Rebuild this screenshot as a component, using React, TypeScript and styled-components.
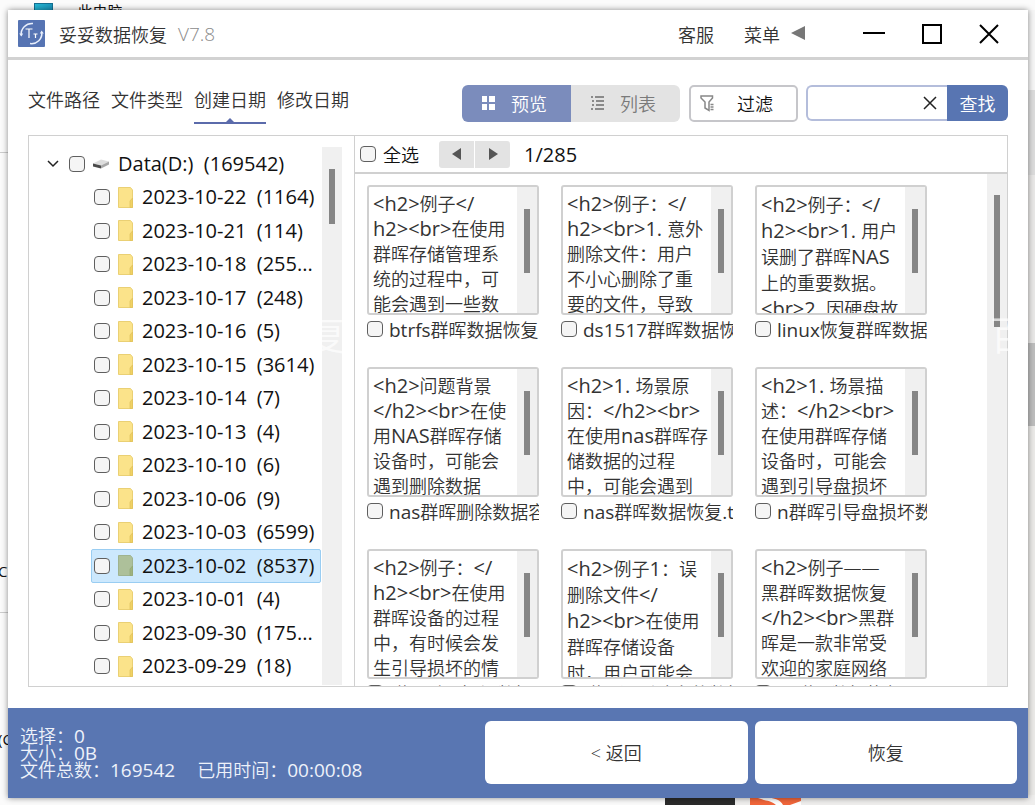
import React from "react";
import styled, { createGlobalStyle, css } from "styled-components";

const GlobalStyle = createGlobalStyle`
  *, *::before, *::after { box-sizing: border-box; }
  body {
    margin: 0;
    background: #fbfbfb;
    color: #333;
    font-family: "Open Sans", "Noto Sans CJK SC", sans-serif;
    font-size: 18px;
    font-weight: 350;
  }
  button, input { font: inherit; color: inherit; margin: 0; }
  button { border: 0; background: none; padding: 0; cursor: pointer; }
`;

/* ---------- desktop behind the window ---------- */

const Desktop = styled.div`
  position: relative;
  height: 100vh;
  min-height: 600px;
  padding: 10px 7px 7px 8px;
  overflow: hidden;
`;

const Backdrop = styled.div`
  position: absolute;
  inset: 0;
  overflow: hidden;
  color: #111;
  font-weight: 400;
`;

const AddressBar = styled.div`
  position: absolute;
  top: 3px;
  left: 34px;
  display: flex;
  gap: 10px;
  align-items: flex-start;
  font-size: 15px;
  line-height: 17px;
`;

const PcIcon = styled.span`
  width: 19px;
  height: 16px;
  background: linear-gradient(120deg, #25b9d6, #1687b0);
  border: 1px solid #146f92;
`;

const EdgeText = styled.span<{ $top: number }>`
  position: absolute;
  left: -2px;
  top: ${(p) => p.$top}px;
  font-size: 15px;
  line-height: 18px;
`;

const Rule = styled.span<{ $top: number }>`
  position: absolute;
  left: 0;
  top: ${(p) => p.$top}px;
  width: 10px;
  height: 1px;
  background: #ccc;
`;

const RightEdge = styled.div`
  position: absolute;
  right: 0;
  top: 10px;
  bottom: 0;
  width: 10px;
  background: linear-gradient(#f6f6f6 0 80px, #dcdcdc 80px 165px, #e9e8e7 165px 333px, #bdbdbd 333px 416px, #ebeae8 416px);
`;

const Taskbar = styled.div`
  position: absolute;
  left: 665px;
  right: 0;
  bottom: 0;
  height: 10px;
  display: flex;
  gap: 15px;
  background: #efeeed;
`;

const TaskDark = styled.span`
  width: 70px;
  background: #2b2b2b;
`;

/* ---------- window ---------- */

const Window = styled.main`
  position: relative;
  height: 100%;
  display: flex;
  flex-direction: column;
  background: #fff;
  box-shadow: 0 0 6px rgba(0, 0, 0, 0.45);
`;

const TitleBar = styled.header`
  display: flex;
  align-items: center;
  height: 50px;
  flex: none;
  padding: 0 29px 0 10px;
  border-bottom: 3px solid #d2d2d2;
`;

const AppName = styled.h1`
  margin: 0 0 0 14px;
  font-size: 18px;
  font-weight: 350;
`;

const Version = styled.span`
  margin-left: 11px;
  font-size: 19px;
  color: #8c8c8c;
`;

const TitleActions = styled.nav`
  display: flex;
  align-items: center;
  margin-left: auto;
  gap: 30px;
`;

const MenuButton = styled.button`
  display: flex;
  align-items: center;
  gap: 11px;
`;

const MenuArrow = styled.svg`
  margin-bottom: 2px;
`;

const WindowControls = styled.div`
  display: flex;
  align-items: center;
  gap: 37px;
  margin-left: 58px;
`;

const IconButton = styled.button`
  display: flex;
`;

const Content = styled.section`
  flex: 1;
  min-height: 0;
  display: flex;
  flex-direction: column;
  padding: 25px 20px 21px;
`;

const Toolbar = styled.div`
  display: flex;
  align-items: flex-start;
  height: 37px;
  flex: none;
  margin-bottom: 13px;
`;

const Tabs = styled.div`
  display: flex;
  gap: 11px;
  margin-right: auto;
`;

const Tab = styled.button<{ $active?: boolean }>`
  position: relative;
  height: 39px;
  padding-bottom: 7px;
  line-height: 30px;
  white-space: nowrap;
  border-bottom: 2px solid ${(p) => (p.$active ? "#5b6bab" : "transparent")};
  ${(p) =>
    p.$active &&
    css`
      &::after {
        content: "";
        position: absolute;
        left: 50%;
        bottom: 0;
        margin-left: -4px;
        border: 4px solid transparent;
        border-top: 0;
        border-bottom-color: #5b6bab;
      }
    `}
`;

const ViewSwitch = styled.div`
  display: flex;
  height: 37px;
  border-radius: 6px;
  overflow: hidden;
`;

const ViewButton = styled.button<{ $active?: boolean }>`
  display: flex;
  align-items: center;
  justify-content: center;
  gap: 16px;
  width: 109px;
  padding: 0 4px 2px 0;
  color: ${(p) => (p.$active ? "#fff" : "#7a7a7a")};
  background: ${(p) => (p.$active ? "#7b8cbc" : "#e3e3e3")};
`;

const FilterButton = styled.button`
  display: flex;
  align-items: center;
  gap: 21px;
  width: 109px;
  height: 37px;
  margin: 0 8px 0 9px;
  padding: 0 0 1px 9px;
  border: 2px solid #c6c6ca;
  border-radius: 5px;
  color: #111;
`;

const SearchForm = styled.form`
  display: flex;
  height: 36px;
`;

const SearchField = styled.div`
  display: flex;
  align-items: center;
  width: 141px;
  padding-right: 10px;
  border: 2px solid #b4bddb;
  border-right: 0;
  border-radius: 6px 0 0 6px;
`;

const SearchInput = styled.input`
  flex: 1;
  min-width: 0;
  border: 0;
  outline: 0;
  background: transparent;
  padding: 0 6px;
`;

const SearchButton = styled.button`
  width: 61px;
  border-radius: 0 6px 6px 0;
  background: #5875b2;
  color: #fff;
`;

/* ---------- main panel ---------- */

const Panel = styled.div`
  flex: 1;
  min-height: 0;
  display: flex;
  border: 1px solid #d0d0d0;
`;

const TreePane = styled.aside`
  display: flex;
  width: 326px;
  flex: none;
  border-right: 1px solid #d0d0d0;
`;

const Tree = styled.ul`
  flex: 1;
  display: flex;
  flex-direction: column;
  margin: 0;
  padding: 11px 1px 3px 16px;
  list-style: none;
  font-size: 20px;
  font-weight: 400;
  color: #111;
`;

const TreeRow = styled.li<{ $child?: boolean; $selected?: boolean }>`
  flex: 1;
  min-height: 0;
  display: flex;
  align-items: center;
  margin-left: ${(p) => (p.$child ? 46 : 0)}px;
  padding-left: ${(p) => (p.$child ? 2 : 1)}px;
  border: 1px solid ${(p) => (p.$selected ? "#99cdf2" : "transparent")};
  background: ${(p) => (p.$selected ? "#cce8fd" : "transparent")};
  border-radius: 2px;
  white-space: pre;
`;

const TreeLabel = styled.label`
  display: flex;
  align-items: center;
  line-height: 28px;
`;

const Chevron = styled.svg`
  flex: none;
  margin-right: 10px;
`;

const ItemIcon = styled.svg`
  flex: none;
  margin: 0 9px 0 8px;
`;

const Check = styled.input.attrs({ type: "checkbox" })`
  appearance: none;
  flex: none;
  width: 16px;
  height: 16px;
  border: 1px solid #5f5f5f;
  border-radius: 4px;
  background: #f5f5f5;
  &:checked { background: #5875b2; }
`;

const ScrollTrack = styled.div<{ $gap: number }>`
  flex: none;
  width: 20px;
  padding-top: ${(p) => p.$gap}px;
  background: #f0f0f0;
`;

const ScrollThumb = styled.div<{ $size: number }>`
  width: 6px;
  height: ${(p) => p.$size}px;
  margin-left: 7px;
  background: #868686;
`;

const TreeScroll = styled.div`
  display: flex;
  padding: 11px 12px 1px 0;
`;

const PreviewPane = styled.div`
  flex: 1;
  min-width: 0;
  display: flex;
  flex-direction: column;
`;

const PreviewHeader = styled.div`
  display: flex;
  align-items: center;
  height: 38px;
  flex: none;
  padding-left: 5px;
  border-bottom: 2px solid #d0d0d0;
  color: #111;
`;

const SelectAll = styled.label`
  display: flex;
  align-items: center;
  gap: 7px;
`;

const Pager = styled.div`
  display: flex;
  gap: 1px;
  margin: 0 14px 0 20px;
  border-radius: 3px;
  overflow: hidden;
`;

const PagerButton = styled.button`
  display: flex;
  align-items: center;
  justify-content: center;
  width: 35px;
  height: 27px;
  background: #e3e3e3;
`;

const PageCount = styled.span`
  font-size: 20px;
  font-weight: 400;
`;

const PreviewBody = styled.div`
  flex: 1;
  min-height: 0;
  display: flex;
  overflow: hidden;
`;

const CardGrid = styled.div`
  flex: 1;
  min-width: 0;
  display: grid;
  grid-template-columns: repeat(auto-fill, 172px);
  grid-auto-rows: 160px;
  gap: 22px;
  padding: 11px 0 0 12px;
`;

const Card = styled.article`
  min-width: 0;
`;

const CardPreview = styled.div`
  display: flex;
  height: 130px;
  border: 2px solid #d0d0d0;
  border-radius: 3px;
  overflow: hidden;
`;

const CardText = styled.p<{ $loose?: boolean }>`
  flex: 1;
  min-width: 0;
  margin: 0;
  padding: 5px 0 0 4px;
  line-height: ${(p) => (p.$loose ? 26 : 25)}px;
  white-space: pre;
`;

const CardName = styled.label`
  display: flex;
  align-items: center;
  gap: 6px;
  height: 28px;
  overflow: hidden;
  white-space: nowrap;
`;

const Latin = styled.span<{ $size: number }>`
  font-size: ${(p) => p.$size}px;
  line-height: 0;
  font-weight: 400;
`;

/* ---------- footer ---------- */

const Footer = styled.footer`
  display: flex;
  align-items: center;
  height: 90px;
  flex: none;
  padding: 0 11px 0 12px;
  background: #5976b2;
`;

const Stats = styled.div`
  flex: 1;
  min-width: 0;
  line-height: 17px;
  white-space: nowrap;
  color: #eef2fa;
`;

const StatLine = styled.div`
  display: flex;
  gap: 22px;
`;

const FooterActions = styled.div`
  display: flex;
  gap: 7px;
  width: 532px;
`;

const ActionButton = styled.button`
  flex: 1;
  height: 63px;
  margin-bottom: 2px;
  border-radius: 6px;
  background: #fff;
`;

const Watermark = styled.span<{ $left: number }>`
  position: absolute;
  left: ${(p) => p.$left}px;
  top: 302px;
  font-size: 40px;
  line-height: 46px;
  color: rgba(255, 255, 255, 0.7);
  pointer-events: none;
`;

/* Latin runs are set a little larger than the Chinese text around them. */
function Mixed({ text, size = 20 }: { text: string; size?: number }) {
  return (
    <>
      {text.split(/([\x20-\x7e]+)/).map((part, i) =>
        i % 2 ? (
          <Latin key={i} $size={size}>{part}</Latin>
        ) : (
          part
        )
      )}
    </>
  );
}

const folders: [string, string][] = [
  ["2023-10-22", "(1164)"],
  ["2023-10-21", "(114)"],
  ["2023-10-18", "(255..."],
  ["2023-10-17", "(248)"],
  ["2023-10-16", "(5)"],
  ["2023-10-15", "(3614)"],
  ["2023-10-14", "(7)"],
  ["2023-10-13", "(4)"],
  ["2023-10-10", "(6)"],
  ["2023-10-06", "(9)"],
  ["2023-10-03", "(6599)"],
  ["2023-10-02", "(8537)"],
  ["2023-10-01", "(4)"],
  ["2023-09-30", "(175..."],
  ["2023-09-29", "(18)"],
];

const files: { name: string; lines: string[]; loose?: boolean }[] = [
  { name: "btrfs群晖数据恢复", lines: ["<h2>例子</", "h2><br>在使用", "群晖存储管理系", "统的过程中，可", "能会遇到一些数"] },
  { name: "ds1517群晖数据恢复", lines: ["<h2>例子：</", "h2><br>1. 意外", "删除文件：用户", "不小心删除了重", "要的文件，导致"] },
  { name: "linux恢复群晖数据", loose: true, lines: ["<h2>例子：</", "h2><br>1. 用户", "误删了群晖NAS", "上的重要数据。", "<br>2. 因硬盘故"] },
  { name: "nas群晖删除数据容", lines: ["<h2>问题背景", "</h2><br>在使", "用NAS群晖存储", "设备时，可能会", "遇到删除数据"] },
  { name: "nas群晖数据恢复.txt", lines: ["<h2>1. 场景原", "因：</h2><br>", "在使用nas群晖存", "储数据的过程", "中，可能会遇到"] },
  { name: "n群晖引导盘损坏数据", lines: ["<h2>1. 场景描", "述：</h2><br>", "在使用群晖存储", "设备时，可能会", "遇到引导盘损坏"] },
  { name: "群晖引导损坏数据", lines: ["<h2>例子：</", "h2><br>在使用", "群晖设备的过程", "中，有时候会发", "生引导损坏的情"] },
  { name: "群晖误删除文件数据", loose: true, lines: ["<h2>例子1：误", "删除文件</", "h2><br>在使用", "群晖存储设备", "时，用户可能会"] },
  { name: "黑群晖数据恢复", lines: ["<h2>例子——", "黑群晖数据恢复", "</h2><br>黑群", "晖是一款非常受", "欢迎的家庭网络"] },
];

function Logo() {
  return (
    <svg width="27" height="27" viewBox="0 0 27 27" role="img" aria-label="TT">
      <rect width="27" height="27" rx="1" fill="#5674b3" />
      <path d="M3.200 15.500C2.500 8.500 8 3 15 3.500" fill="none" stroke="#e8effc" strokeWidth="1.500" />
      <path d="M1.200 13.500H5.200L3.400 16.500Z" fill="#e8effc" />
      <path d="M23.800 12C24.500 19 19 24.500 12 23.500" fill="none" stroke="#e8effc" strokeWidth="1.500" />
      <path d="M21.800 13.500H25.800L23.600 10.500Z" fill="#e8effc" />
      <path d="M7.500 9H14.500M11 9V18M15.500 14H19.500M17.500 14V18" fill="none" stroke="#fff" strokeWidth="1.200" />
    </svg>
  );
}

function FolderIcon({ selected }: { selected?: boolean }) {
  return (
    <ItemIcon width="15" height="21" viewBox="0 0 15 21" aria-hidden="true">
      <path d="M.5.5H12.500L14.500 3V20.500H.5Z" fill={selected ? "#adc09a" : "#fbe38a"} stroke={selected ? "#9fb38f" : "#ead074"} />
      <path d="M14.500 11L12 14V20.500H14.500Z" fill={selected ? "#9fb27f" : "#f0d264"} stroke={selected ? "#92a873" : "#dfc05a"} strokeWidth=".7" />
    </ItemIcon>
  );
}

function DriveIcon() {
  return (
    <ItemIcon width="16" height="10" viewBox="0 0 16 10" aria-hidden="true">
      <path d="M0 4.500L8 0.500 16 2.500 8 6.500Z" fill="#dedede" />
      <path d="M0 4.500L8 6.500V9.500L0 7.500Z" fill="#4b4b4b" />
      <path d="M8 6.500L16 2.500V5.500L8 9.500Z" fill="#a8a8a8" />
    </ItemIcon>
  );
}

export default function App() {
  return (
    <>
      <GlobalStyle />
      <Desktop>
        <Backdrop aria-hidden="true">
          <AddressBar>
            <PcIcon />
            <span>›</span>
            <span>此电脑</span>
            <span>›</span>
          </AddressBar>
          <Rule $top={152} />
          <Rule $top={612} />
          <EdgeText $top={562}>C</EdgeText>
          <EdgeText $top={730}>(C</EdgeText>
          <RightEdge />
          <Taskbar>
            <TaskDark />
            <svg width="51" height="10" viewBox="0 0 51 10">
              <rect width="51" height="10" fill="#f2663a" />
              <path d="M8 3C20 1 31 4 33 10H26C21 5 15 6 8 3ZM40 10L51 6V10Z" fill="#fff" />
            </svg>
          </Taskbar>
        </Backdrop>

        <Window>
          <TitleBar>
            <Logo />
            <AppName>妥妥数据恢复</AppName>
            <Version>V7.8</Version>
            <TitleActions>
              <button type="button">客服</button>
              <MenuButton type="button">
                菜单
                <MenuArrow width="14" height="14" viewBox="0 0 14 14" aria-hidden="true">
                  <path d="M0 7L14 0V14Z" fill="#777" />
                </MenuArrow>
              </MenuButton>
            </TitleActions>
            <WindowControls>
              <IconButton type="button" aria-label="最小化">
                <svg width="22" height="20" viewBox="0 0 22 20"><path d="M0 9H22" stroke="#000" strokeWidth="2" /></svg>
              </IconButton>
              <IconButton type="button" aria-label="最大化">
                <svg width="20" height="20" viewBox="0 0 20 20"><path d="M1 1H19V19H1Z" fill="none" stroke="#000" strokeWidth="2" /></svg>
              </IconButton>
              <IconButton type="button" aria-label="关闭">
                <svg width="20" height="20" viewBox="0 0 20 20"><path d="M1 1L19 19M19 1L1 19" fill="none" stroke="#000" strokeWidth="2" /></svg>
              </IconButton>
            </WindowControls>
          </TitleBar>

          <Content>
            <Toolbar>
              <Tabs>
                <Tab type="button">文件路径</Tab>
                <Tab type="button">文件类型</Tab>
                <Tab type="button" $active>创建日期</Tab>
                <Tab type="button">修改日期</Tab>
              </Tabs>
              <ViewSwitch>
                <ViewButton type="button" $active>
                  <svg width="13" height="14" viewBox="0 0 13 14" aria-hidden="true">
                    <path d="M0 0H5V6H0ZM7 0H13V6H7ZM0 8H5V14H0ZM7 8H13V14H7Z" fill="#fff" />
                  </svg>
                  预览
                </ViewButton>
                <ViewButton type="button">
                  <svg width="13" height="14" viewBox="0 0 13 14" aria-hidden="true">
                    <path d="M0 1H2M1 5H3M1 9H3M0 13H2M4 1H13M5 5H13M5 9H13M4 13H13" stroke="#8a8a8a" strokeWidth="2" />
                  </svg>
                  列表
                </ViewButton>
              </ViewSwitch>
              <FilterButton type="button">
                <svg width="16" height="17" viewBox="0 0 16 17" fill="none" stroke="#888" strokeWidth="1.500" aria-hidden="true">
                  <path d="M1 1H12.500V3L9 7V15.500L5 13V7L1 3Z" />
                  <path d="M10.500 9.500H13.500M10.500 12H13.500M10.500 14.500H13.500" />
                </svg>
                过滤
              </FilterButton>
              <SearchForm onSubmit={(e) => e.preventDefault()}>
                <SearchField>
                  <SearchInput aria-label="查找" />
                  <IconButton type="reset" aria-label="清除">
                    <svg width="14" height="14" viewBox="0 0 14 14"><path d="M1 1L13 13M13 1L1 13" stroke="#222" strokeWidth="1.500" /></svg>
                  </IconButton>
                </SearchField>
                <SearchButton type="submit">查找</SearchButton>
              </SearchForm>
            </Toolbar>

            <Panel>
              <TreePane>
                <Tree>
                  <TreeRow>
                    <Chevron width="12" height="8" viewBox="0 0 12 8" aria-hidden="true">
                      <path d="M1 1L6 6 11 1" fill="none" stroke="#222" strokeWidth="1.500" />
                    </Chevron>
                    <TreeLabel>
                      <Check />
                      <DriveIcon />
                      {"Data(D:)  (169542)"}
                    </TreeLabel>
                  </TreeRow>
                  {folders.map(([date, count]) => {
                    const selected = date === "2023-10-02";
                    return (
                      <TreeRow key={date} $child $selected={selected}>
                        <TreeLabel>
                          <Check />
                          <FolderIcon selected={selected} />
                          {`${date}  ${count}`}
                        </TreeLabel>
                      </TreeRow>
                    );
                  })}
                </Tree>
                <TreeScroll>
                  <ScrollTrack $gap={22}><ScrollThumb $size={55} /></ScrollTrack>
                </TreeScroll>
              </TreePane>

              <PreviewPane>
                <PreviewHeader>
                  <SelectAll><Check />全选</SelectAll>
                  <Pager>
                    <PagerButton type="button" aria-label="上一页">
                      <svg width="10" height="12" viewBox="0 0 10 12"><path d="M0 6L9 0V12Z" fill="#555" /></svg>
                    </PagerButton>
                    <PagerButton type="button" aria-label="下一页">
                      <svg width="10" height="12" viewBox="0 0 10 12"><path d="M10 6L1 0V12Z" fill="#555" /></svg>
                    </PagerButton>
                  </Pager>
                  <PageCount>1/285</PageCount>
                </PreviewHeader>
                <PreviewBody>
                  <CardGrid>
                    {files.map((file) => (
                      <Card key={file.name}>
                        <CardPreview>
                          <CardText $loose={file.loose}><Mixed text={file.lines.join("\n")} /></CardText>
                          <ScrollTrack $gap={22}><ScrollThumb $size={64} /></ScrollTrack>
                        </CardPreview>
                        <CardName>
                          <Check />
                          <span><Mixed text={file.name} size={19} /></span>
                        </CardName>
                      </Card>
                    ))}
                  </CardGrid>
                  <ScrollTrack $gap={21}><ScrollThumb $size={132} /></ScrollTrack>
                </PreviewBody>
              </PreviewPane>
            </Panel>
          </Content>

          <Footer>
            <Stats>
              <StatLine><span><Mixed text="选择：0" size={19} /></span></StatLine>
              <StatLine><span><Mixed text="大小：0B" size={19} /></span></StatLine>
              <StatLine>
                <span><Mixed text="文件总数：169542" size={19} /></span>
                <span><Mixed text="已用时间：00:00:08" size={19} /></span>
              </StatLine>
            </Stats>
            <FooterActions>
              <ActionButton type="button">&lt; 返回</ActionButton>
              <ActionButton type="button">恢复</ActionButton>
            </FooterActions>
          </Footer>
          <Watermark $left={298} aria-hidden="true">复</Watermark>
          <Watermark $left={982} aria-hidden="true">百</Watermark>
        </Window>
      </Desktop>
    </>
  );
}
